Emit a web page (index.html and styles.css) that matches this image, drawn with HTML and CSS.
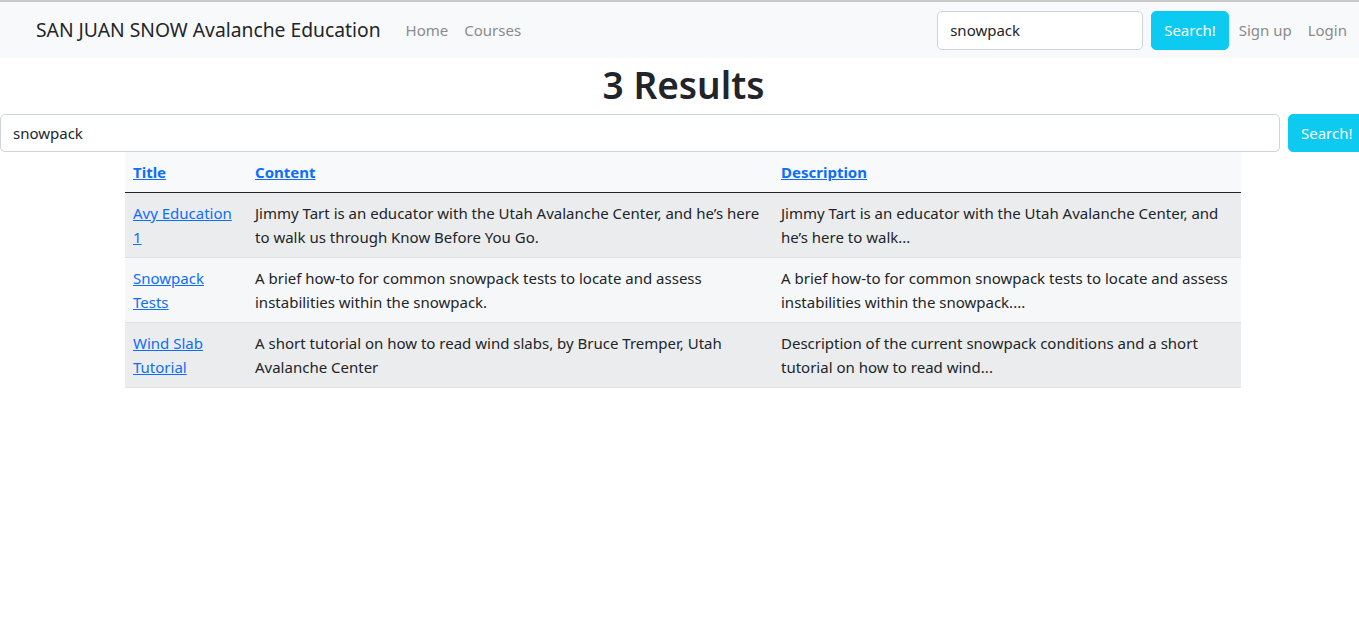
FILE: index.html
```html
<!DOCTYPE html>
<html lang="en">
<head>
<meta charset="utf-8">
<title>Search results</title>
<link rel="stylesheet" href="styles.css">
</head>
<body>
<nav class="navbar">
  <a class="brand" href="#">SAN JUAN SNOW Avalanche Education</a>
  <ul class="nav-links">
    <li><a href="#">Home</a></li>
    <li><a href="#">Courses</a></li>
  </ul>
  <form class="nav-search">
    <input class="field nav-field" type="text" value="snowpack">
    <button class="btn-info" type="button">Search!</button>
  </form>
  <ul class="nav-links nav-right">
    <li><a href="#">Sign up</a></li>
    <li><a href="#">Login</a></li>
  </ul>
</nav>
<main>
  <h1 class="results-title">3 Results</h1>
  <form class="main-search">
    <input class="field main-field" type="text" value="snowpack">
    <button class="btn-info" type="button">Search!</button>
  </form>
  <table class="results">
    <thead>
      <tr>
        <th class="col-title"><a href="#">Title</a></th>
        <th class="col-content"><a href="#">Content</a></th>
        <th class="col-desc"><a href="#">Description</a></th>
      </tr>
    </thead>
    <tbody>
      <tr class="odd">
        <td><a href="#">Avy Education 1</a></td>
        <td>Jimmy Tart is an educator with the Utah Avalanche Center, and he’s here to walk us through Know Before You Go.</td>
        <td>Jimmy Tart is an educator with the Utah Avalanche Center, and he’s here to walk...</td>
      </tr>
      <tr class="even">
        <td><a href="#">Snowpack Tests</a></td>
        <td>A brief how-to for common snowpack tests to locate and assess instabilities within the snowpack.</td>
        <td>A brief how-to for common snowpack tests to locate and assess instabilities within the snowpack....</td>
      </tr>
      <tr class="odd">
        <td><a href="#">Wind Slab Tutorial</a></td>
        <td>A short tutorial on how to read wind slabs, by Bruce Tremper, Utah Avalanche Center</td>
        <td>Description of the current snowpack conditions and a short tutorial on how to read wind...</td>
      </tr>
    </tbody>
  </table>
</main>
</body>
</html>
```
FILE: styles.css
```css
* { box-sizing: border-box; }
html, body { margin: 0; padding: 0; }
body {
  font-family: "Noto Sans", "Open Sans", sans-serif;
  font-size: 15px;
  line-height: 24px;
  color: #212529;
  background: #fff;
  overflow-x: hidden;
  border-top: 2px solid #c8c8c8;
}
a { color: #0d6efd; }
.navbar {
  display: flex;
  align-items: center;
  height: 56px;
  background: #f8f9fa;
  padding: 0 12px 0 36px;
}
.brand {
  font-size: 19.3px;
  color: #212529;
  text-decoration: none;
  margin-right: 25px;
}
.nav-links {
  display: flex;
  list-style: none;
  margin: 0;
  padding: 0;
  gap: 16px;
}
.nav-links a {
  color: #8a8b8c;
  text-decoration: none;
  font-size: 15px;
}
.nav-search {
  display: flex;
  gap: 8px;
  margin-left: auto;
  margin-right: 10px;
}
.field {
  font: inherit;
  color: #212529;
  background: #fff;
  border: 1px solid #ced4da;
  border-radius: 5px;
  padding: 0 12px;
  height: 39px;
}
.nav-field { width: 206px; }
.btn-info {
  font: inherit;
  color: #fff;
  background: #0dcaf0;
  border: 1px solid #0dcaf0;
  border-radius: 5px;
  height: 39px;
  padding: 0 12px;
  flex: none;
}
.results-title {
  margin: 0;
  height: 56px;
  line-height: 54px;
  text-align: center;
  font-size: 37px;
  font-weight: 600;
  padding-left: 8px;
}
.main-search {
  display: flex;
  gap: 8px;
  width: 1400px;
}
.main-field { width: 1280px; height: 38px; flex: none; }
.main-search .btn-info { height: 38px; }
.results {
  width: 1116px;
  margin: 0 0 0 125px;
  border-collapse: collapse;
}
.results th, .results td {
  text-align: left;
  vertical-align: top;
  padding: 8px;
}
.results th {
  background: #f8f9fa;
  font-weight: 700;
  height: 40px;
  border-bottom: 1px solid #212529;
}
.col-title { width: 122px; }
.col-content { width: 526px; }
.results td { border-top: 1px solid #dee2e6; }
.results tbody tr:first-child td { border-top: none; }
.results tbody tr:last-child td { border-bottom: 1px solid #dee2e6; }
.results tr.odd td { background: #ebeced; }
.results tr.even td { background: #f6f7f8; }
```
